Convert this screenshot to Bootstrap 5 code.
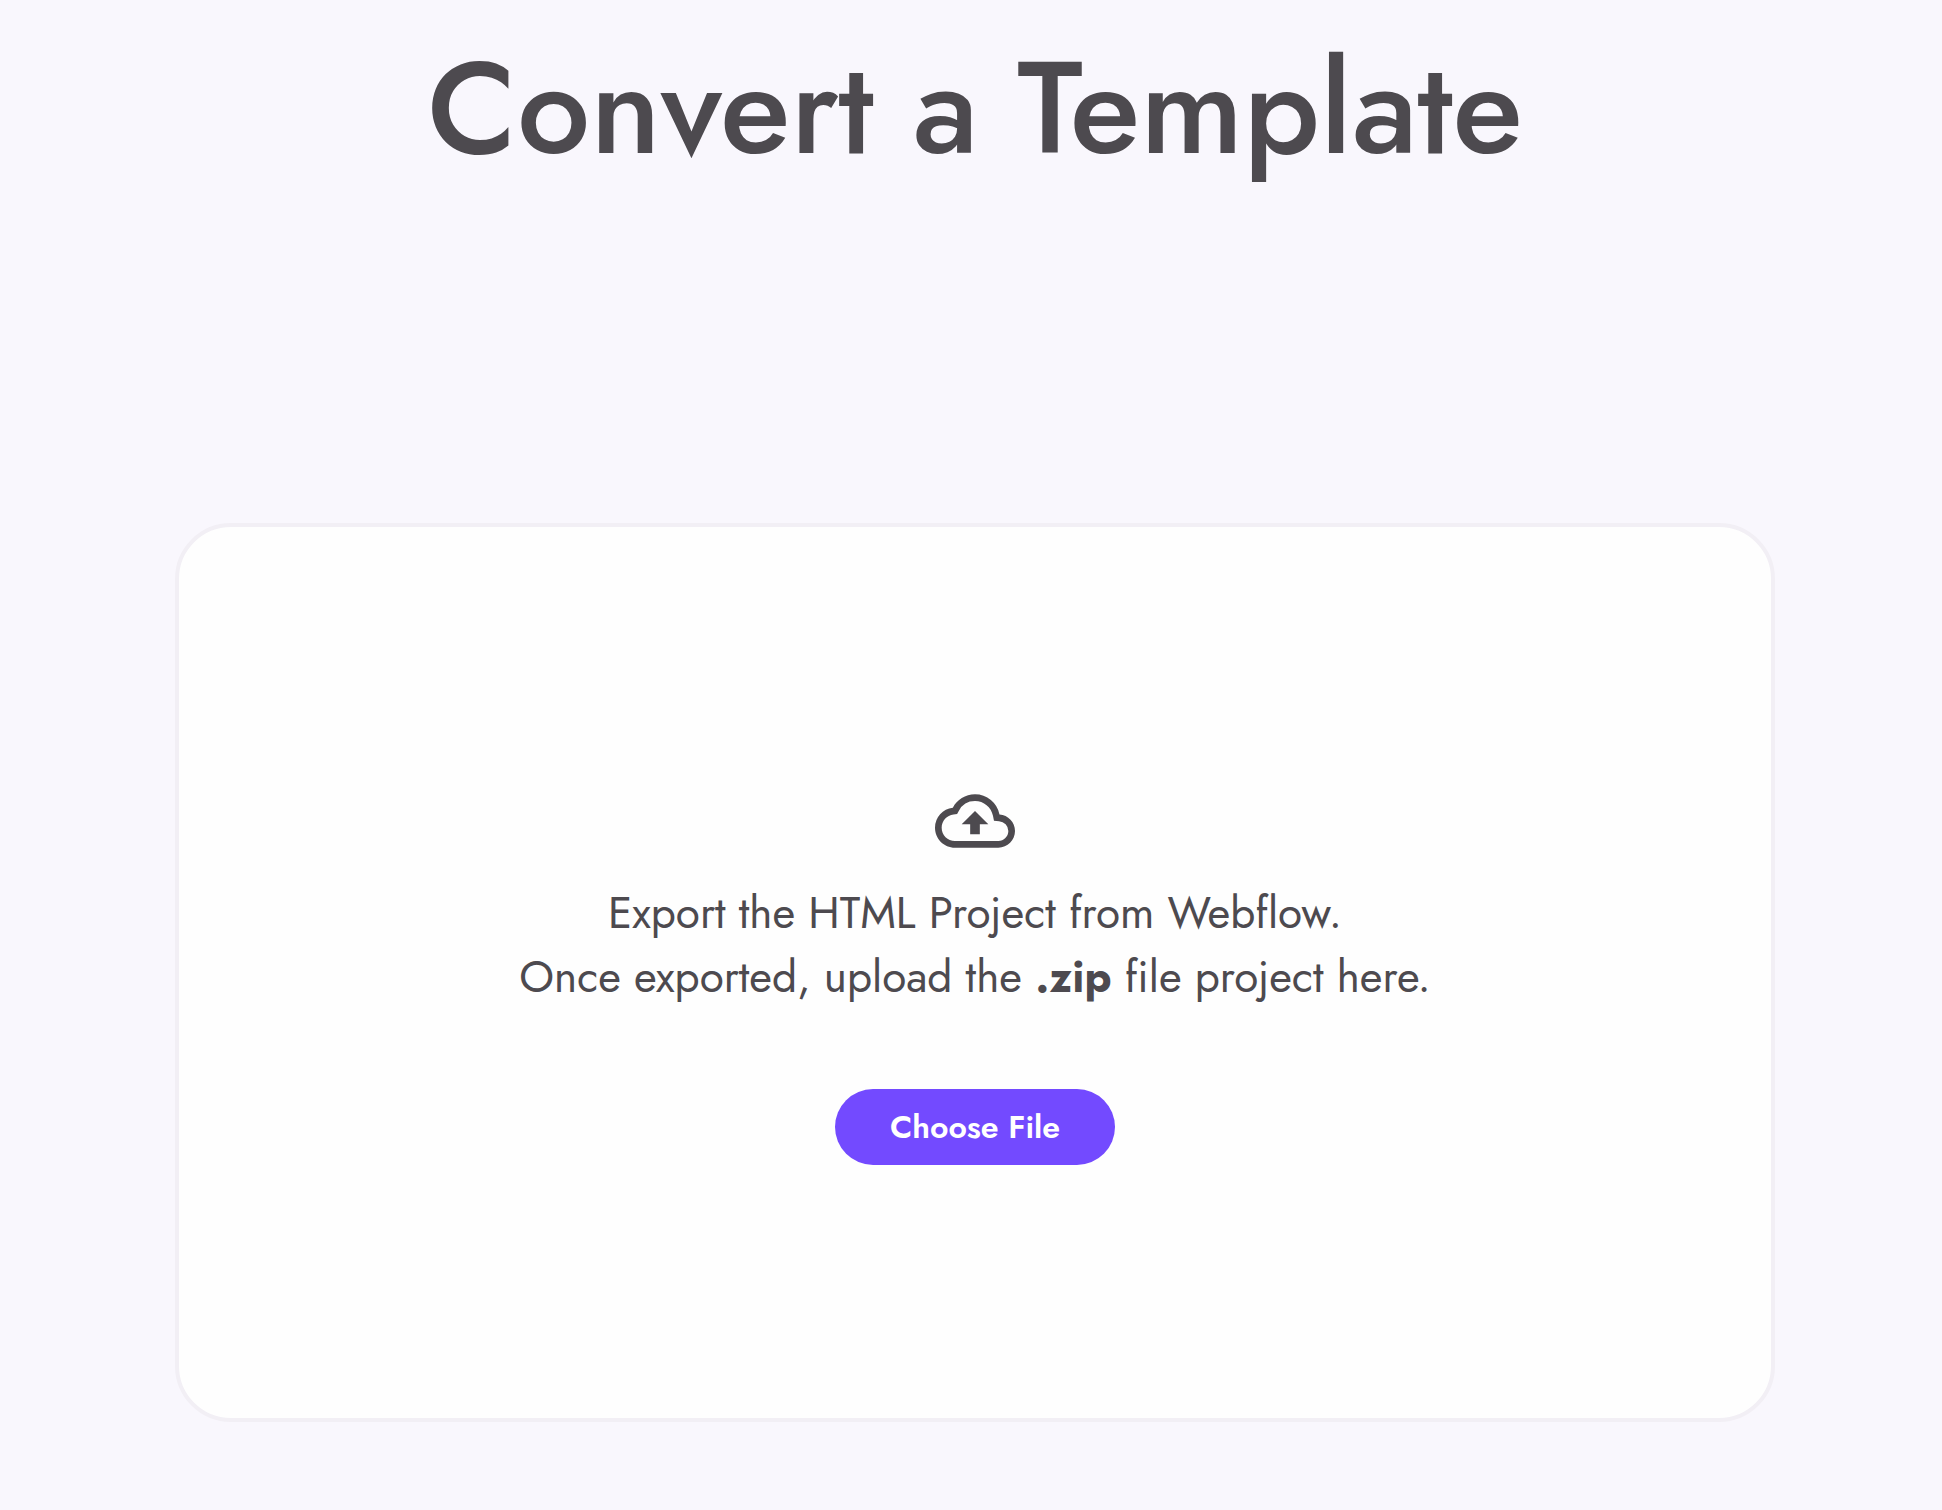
<!DOCTYPE html>
<html lang="en">
<head>
<meta charset="utf-8">
<meta name="viewport" content="width=device-width, initial-scale=1">
<title>Convert a Template</title>
<link href="https://cdn.jsdelivr.net/npm/bootstrap@5.3.0/dist/css/bootstrap.min.css" rel="stylesheet">
<style>
  body { background: #f9f7fd; color: #4d4a4f; font-family: Jost, Lato, "Open Sans", sans-serif; }
  .convert-page { padding: 32px 167px 88px 175px; }
  .page-title { font-size: 130px; line-height: 152px; font-weight: 500; margin-bottom: 339px; }
  .upload-card { min-height: 899px; border: 4px solid #f2eff5; border-radius: 56px; background: #fefefe; color: inherit; }
  .upload-icon { width: 80px; height: 80px; }
  .upload-text { font-size: 44px; line-height: 64px; margin: 20px 0 80px; }
  .upload-text strong { font-weight: 700; }
  .choose-btn { min-width: 280px; min-height: 76px; padding: 12px 48px; font-size: 32px; line-height: 48px; font-weight: 600; --bs-btn-color: #fff; --bs-btn-bg: #734aff; --bs-btn-hover-color: #fff; --bs-btn-hover-bg: #6039ec; --bs-btn-active-color: #fff; --bs-btn-active-bg: #552ee0; }
</style>
<script src="https://cdn.jsdelivr.net/npm/bootstrap@5.3.0/dist/js/bootstrap.bundle.min.js" defer></script>
</head>
<body>
<main class="convert-page container-fluid">
  <h1 class="page-title text-center">Convert a Template</h1>
  <section class="upload-card card d-flex flex-column align-items-center justify-content-center text-center">
    <svg class="upload-icon" viewBox="0 0 24 24" fill="currentColor" aria-hidden="true">
      <path d="M19.35 10.04A7.49 7.49 0 0 0 12 4C9.11 4 6.6 5.64 5.35 8.04A5.994 5.994 0 0 0 0 14c0 3.31 2.69 6 6 6h13c2.76 0 5-2.24 5-5 0-2.64-2.05-4.78-4.65-4.96zM19 18H6c-2.21 0-4-1.79-4-4 0-2.05 1.53-3.76 3.56-3.97l1.07-.11.5-.95A5.469 5.469 0 0 1 12 6c2.62 0 4.88 1.86 5.39 4.43l.3 1.5 1.53.11A2.98 2.98 0 0 1 22 15c0 1.65-1.35 3-3 3zM8 13h2.55v3h2.9v-3H16l-4-4z"/>
    </svg>
    <p class="upload-text">Export the HTML Project from Webflow.<br>Once exported, upload the <strong>.zip</strong> file project here.</p>
    <button type="button" class="choose-btn btn border-0 rounded-pill">Choose File</button>
  </section>
</main>
</body>
</html>
